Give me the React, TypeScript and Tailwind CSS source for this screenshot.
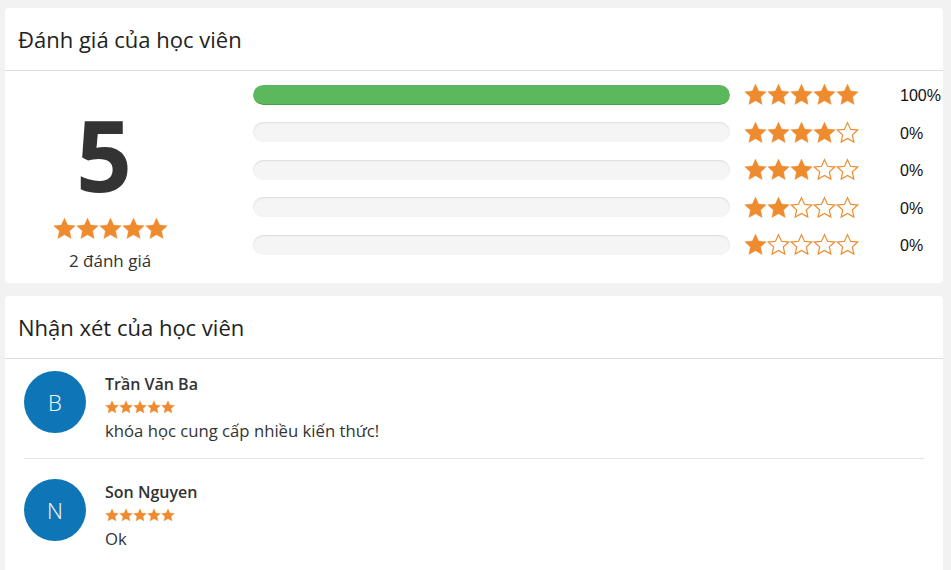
import React from 'react';

const ORANGE = '#ef8b2f';

// 5-point star, a bit fatter than the geometric one
const starPoints = (() => {
  const pts: string[] = [];
  for (let i = 0; i < 10; i++) {
    const r = i % 2 === 0 ? 11.8 : 5.6;
    const a = (Math.PI / 5) * i - Math.PI / 2;
    pts.push(`${(12 + r * Math.cos(a)).toFixed(2)},${(12.9 + r * Math.sin(a)).toFixed(2)}`);
  }
  return pts.join(' ');
})();

const Star = ({ size, filled = true }: { size: number; filled?: boolean }) => (
  <svg width={size} height={size} viewBox="0 0 24 24" className="shrink-0">
    <polygon
      points={starPoints}
      fill={filled ? ORANGE : '#fff'}
      stroke={ORANGE}
      strokeWidth={filled ? 0.4 : 1.3}
      strokeLinejoin="miter"
      transform={filled ? undefined : 'translate(12 12.9) scale(0.95) translate(-12 -12.9)'}
    />
  </svg>
);

const Stars = ({ count, size }: { count: number; size: number }) => (
  <div className="flex items-center">
    {[0, 1, 2, 3, 4].map((i) => (
      <Star key={i} size={size} filled={i < count} />
    ))}
  </div>
);

const breakdown = [
  { stars: 5, percent: 100 },
  { stars: 4, percent: 0 },
  { stars: 3, percent: 0 },
  { stars: 2, percent: 0 },
  { stars: 1, percent: 0 },
];

const reviews = [
  { initial: 'B', name: 'Trần Văn Ba', text: 'khóa học cung cấp nhiều kiến thức!' },
  { initial: 'N', name: 'Son Nguyen', text: 'Ok' },
];

export default function App() {
  return (
    <div
      className="min-h-screen bg-[#f2f2f2] pt-[8px] pl-[5px] text-[#333]"
      style={{ fontFamily: '"Open Sans", "Noto Sans", sans-serif' }}
    >
      {/* Rating summary */}
      <div className="w-[938px] rounded-[4px] bg-white">
        <div className="flex h-[63px] items-center border-b border-[#dddddd] px-[13px]">
          <h2 className="text-[22px] font-normal text-[#222]">Đánh giá của học viên</h2>
        </div>
        <div className="flex h-[212px]">
          <div className="flex w-[210px] flex-col items-center pt-[36px]">
            <div className="pr-[12px] text-[98px] font-bold leading-[94px] text-[#333]">5</div>
            <div className="mt-[16px]">
              <Stars count={5} size={23} />
            </div>
            <div className="mt-[10px] text-[17px] leading-[22px]">2 đánh giá</div>
          </div>
          <div className="ml-[38px] flex flex-col pt-[5px]">
            {breakdown.map((row) => (
              <div key={row.stars} className="flex h-[37.5px] items-center">
                <div className="h-[20px] w-[477px] overflow-hidden rounded-full bg-[#f5f5f5] shadow-[inset_0_1px_2px_rgba(0,0,0,0.1)]">
                  <div
                    className="h-full rounded-full bg-[#5cb85c] shadow-[inset_0_-1px_0_rgba(0,0,0,0.15)]"
                    style={{ width: `${row.percent}%` }}
                  />
                </div>
                <div className="ml-[14px] w-[156px]">
                  <Stars count={row.stars} size={23} />
                </div>
                <div
                  className="pt-[3px] text-[16px] text-[#111]"
                  style={{ fontFamily: '"Liberation Sans", Arial, sans-serif' }}
                >
                  {row.percent}%
                </div>
              </div>
            ))}
          </div>
        </div>
      </div>

      {/* Reviews */}
      <div className="mt-[13px] w-[938px] rounded-t-[4px] bg-white pb-[20px]">
        <div className="flex h-[63px] items-center border-b border-[#dddddd] px-[13px]">
          <h2 className="text-[22px] font-normal text-[#222]">Nhận xét của học viên</h2>
        </div>
        <div className="px-[19px] pt-[12px]">
          {reviews.map((r, i) => (
            <div
              key={r.name}
              className={
                i === 0
                  ? 'flex gap-[19px] border-b border-[#e5e5e5] pb-[16px]'
                  : 'flex gap-[19px] pt-[20px]'
              }
            >
              <div className="flex h-[62px] w-[62px] shrink-0 items-center justify-center rounded-full bg-[#0e76b6] text-[22px] font-light text-white">
                {r.initial}
              </div>
              <div className="pt-[2px]">
                <div className="text-[16px] font-semibold leading-[22px]">{r.name}</div>
                <div className="mt-[5px]">
                  <Stars count={5} size={14} />
                </div>
                <div className="mt-[6px] text-[16.7px] leading-[22px]">{r.text}</div>
              </div>
            </div>
          ))}
        </div>
      </div>
    </div>
  );
}
